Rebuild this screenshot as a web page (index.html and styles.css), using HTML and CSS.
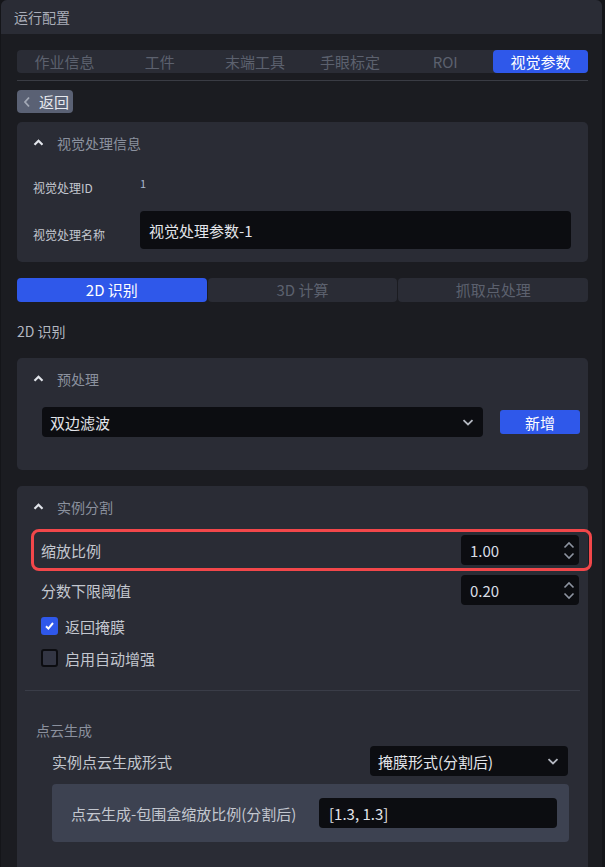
FILE: index.html
```html
<!DOCTYPE html>
<html lang="zh-CN">
<head>
<meta charset="utf-8">
<title>运行配置</title>
<link rel="stylesheet" href="styles.css">
</head>
<body>
<div class="window">
  <div class="win-header">运行配置</div>
  <div class="win-body">
    <div class="tabs">
      <div class="tab">作业信息</div>
      <div class="tab">工件</div>
      <div class="tab">末端工具</div>
      <div class="tab">手眼标定</div>
      <div class="tab">ROI</div>
      <div class="tab active">视觉参数</div>
    </div>
    <div class="tabs-line"></div>
    <button class="back-btn">
      <svg width="8" height="12" viewBox="0 0 8 12"><path d="M6 1.5 L2 6 L6 10.5" fill="none" stroke="#a3a9b6" stroke-width="1.8"/></svg>
      <span>返回</span>
    </button>

    <div class="card info-card">
      <div class="card-head">
        <svg class="chev" width="11" height="7" viewBox="0 0 11 7"><path d="M1.5 5.8 L5.5 1.8 L9.5 5.8" fill="none" stroke="#e1e4ea" stroke-width="2.2"/></svg>
        <span>视觉处理信息</span>
      </div>
      <div class="info-row id-row">
        <span class="info-label">视觉处理ID</span>
        <span class="info-id">1</span>
      </div>
      <div class="info-row name-row">
        <span class="info-label">视觉处理名称</span>
        <div class="text-input big">视觉处理参数-1</div>
      </div>
    </div>

    <div class="subtabs">
      <div class="subtab active">2D 识别</div>
      <div class="subtab">3D 计算</div>
      <div class="subtab">抓取点处理</div>
    </div>

    <div class="section-title">2D 识别</div>

    <div class="card pre-card">
      <div class="card-head">
        <svg class="chev" width="11" height="7" viewBox="0 0 11 7"><path d="M1.5 5.8 L5.5 1.8 L9.5 5.8" fill="none" stroke="#e1e4ea" stroke-width="2.2"/></svg>
        <span>预处理</span>
      </div>
      <div class="pre-row">
        <div class="select wide">
          <span>双边滤波</span>
          <svg width="12" height="7" viewBox="0 0 12 7"><path d="M1.5 1.2 L6 5.5 L10.5 1.2" fill="none" stroke="#b4b8c1" stroke-width="1.8"/></svg>
        </div>
        <button class="primary-btn">新增</button>
      </div>
    </div>

    <div class="card seg-card">
      <div class="card-head">
        <svg class="chev" width="11" height="7" viewBox="0 0 11 7"><path d="M1.5 5.8 L5.5 1.8 L9.5 5.8" fill="none" stroke="#e1e4ea" stroke-width="2.2"/></svg>
        <span>实例分割</span>
      </div>
      <div class="seg-body">
        <div class="form-row highlighted">
          <span class="form-label">缩放比例</span>
          <div class="num-input">
            <span>1.00</span>
            <span class="spin">
              <svg width="12" height="8" viewBox="0 0 12 8"><path d="M1.5 6.5 L6 2 L10.5 6.5" fill="none" stroke="#8e94a1" stroke-width="1.6"/></svg>
              <svg width="12" height="8" viewBox="0 0 12 8"><path d="M1.5 1.5 L6 6 L10.5 1.5" fill="none" stroke="#8e94a1" stroke-width="1.6"/></svg>
            </span>
          </div>
        </div>
        <div class="form-row">
          <span class="form-label">分数下限阈值</span>
          <div class="num-input">
            <span>0.20</span>
            <span class="spin">
              <svg width="12" height="8" viewBox="0 0 12 8"><path d="M1.5 6.5 L6 2 L10.5 6.5" fill="none" stroke="#8e94a1" stroke-width="1.6"/></svg>
              <svg width="12" height="8" viewBox="0 0 12 8"><path d="M1.5 1.5 L6 6 L10.5 1.5" fill="none" stroke="#8e94a1" stroke-width="1.6"/></svg>
            </span>
          </div>
        </div>
        <div class="check-row">
          <span class="checkbox checked">
            <svg width="11" height="10" viewBox="0 0 11 10"><path d="M2 5.2 L4.4 7.6 L9 2" fill="none" stroke="#ffffff" stroke-width="2"/></svg>
          </span>
          <span class="check-label">返回掩膜</span>
        </div>
        <div class="check-row">
          <span class="checkbox"></span>
          <span class="check-label">启用自动增强</span>
        </div>
        <div class="divider"></div>
        <div class="group-title">点云生成</div>
        <div class="group-row">
          <span class="form-label">实例点云生成形式</span>
          <div class="select mid">
            <span>掩膜形式(分割后)</span>
            <svg width="12" height="7" viewBox="0 0 12 7"><path d="M1.5 1.2 L6 5.5 L10.5 1.2" fill="none" stroke="#b4b8c1" stroke-width="1.8"/></svg>
          </div>
        </div>
        <div class="sub-box">
          <span class="form-label">点云生成-包围盒缩放比例(分割后)</span>
          <div class="text-input box-input">[1.3, 1.3]</div>
        </div>
      </div>
    </div>
  </div>
</div>
</body>
</html>
```

FILE: styles.css
```css
* { box-sizing: border-box; }

html, body {
  margin: 0;
  padding: 0;
  background: #141519;
  height: 867px;
  overflow: hidden;
  font-family: "Noto Sans CJK SC", "Noto Sans", sans-serif;
}

.window {
  margin-left: 1px;
  width: 601px;
  height: 867px;
  background: #1b1c21;
  border-radius: 6px 6px 0 0;
  overflow: hidden;
}

.win-header {
  height: 34px;
  background: #2a2c35;
  color: #a9adb8;
  font-size: 14px;
  line-height: 34px;
  padding-left: 13px;
}

.win-body {
  padding: 16px 14px 0 16px;
}

.tabs {
  display: grid;
  grid-template-columns: repeat(6, 1fr);
  height: 23px;
  background: #2a2c35;
  border-radius: 4px;
}

.tab {
  font-size: 15px;
  line-height: 23px;
  text-align: center;
  color: #5c616e;
  border-radius: 4px;
}

.tab.active {
  background: #2f58ea;
  color: #ffffff;
}

.tabs-line {
  height: 1px;
  background: #3a3c44;
  margin-top: 7px;
}

.back-btn {
  margin-top: 9px;
  height: 23px;
  width: 56px;
  border: none;
  border-radius: 4px;
  background: #5a6174;
  display: flex;
  align-items: center;
  gap: 8px;
  padding: 0 0 0 6px;
  font-family: inherit;
  font-size: 15px;
  color: #e6e9ef;
  line-height: 23px;
}

.card {
  background: #2a2c35;
  border-radius: 5px;
}

.card-head {
  height: 42px;
  display: flex;
  align-items: center;
  gap: 13px;
  color: #8b919e;
  font-size: 14px;
}

.chev { margin-top: -1px; flex: none; }

.info-card {
  margin-top: 9px;
  padding: 0 17px 13px 16px;
}

.info-row {
  display: flex;
  align-items: center;
}

.id-row {
  height: 34px;
  margin-top: 6px;
}

.name-row {
  margin-top: 7px;
}

.info-label {
  width: 107px;
  flex: none;
  font-size: 12px;
  color: #c3c7cf;
}

.name-row .info-label { margin-top: 8px; }

.info-id {
  font-size: 11px;
  color: #a8b6cc;
  margin-bottom: 9px;
}

.text-input {
  background: #0c0d11;
  border-radius: 4px;
  color: #e3e5ea;
  display: flex;
  align-items: center;
}

.text-input.big {
  flex: 1;
  height: 38px;
  padding-left: 9px;
  font-size: 15px;
}

.subtabs {
  margin-top: 16px;
  display: grid;
  grid-template-columns: repeat(3, 1fr);
  gap: 1px;
  height: 24px;
}

.subtab {
  background: #2a2c35;
  border-radius: 4px;
  text-align: center;
  font-size: 15px;
  line-height: 24px;
  color: #5c616e;
}

.subtab.active {
  background: #2f58ea;
  color: #ffffff;
}

.section-title {
  margin-top: 18px;
  font-size: 14px;
  line-height: 22px;
  color: #b3b7c0;
}

.pre-card {
  margin-top: 16px;
  padding: 0 8px 33px 25px;
}

.pre-card .card-head { margin-left: -9px; }

.pre-row {
  margin-top: 7px;
  display: flex;
  align-items: center;
  gap: 17px;
}

.select {
  background: #0c0d11;
  border-radius: 4px;
  height: 30px;
  display: flex;
  align-items: center;
  justify-content: space-between;
  color: #e3e5ea;
  font-size: 15px;
}

.select.wide {
  flex: 1;
  padding: 0 9px 0 8px;
}

.primary-btn {
  width: 80px;
  height: 24px;
  border: none;
  border-radius: 3px;
  background: #2f58ea;
  color: #ffffff;
  font-family: inherit;
  font-size: 15px;
  padding: 0;
}

.seg-card {
  margin-top: 16px;
  padding: 0 9px 40px 24px;
}

.seg-card .card-head { margin-left: -8px; }

.seg-body {
  padding-top: 7px;
}

.form-row {
  display: flex;
  align-items: center;
  justify-content: space-between;
  height: 30px;
  position: relative;
}

.form-row + .form-row { margin-top: 10px; }

.form-row.highlighted::before {
  content: "";
  position: absolute;
  left: -10px;
  right: -13px;
  top: -6px;
  bottom: -6px;
  border: 3px solid #f2474a;
  border-radius: 8px;
  pointer-events: none;
}

.form-label {
  font-size: 15px;
  color: #c3c7cf;
}

.num-input {
  width: 118px;
  height: 30px;
  background: #0c0d11;
  border-radius: 4px;
  display: flex;
  align-items: center;
  justify-content: space-between;
  padding: 0 4px 0 9px;
  font-size: 15px;
  color: #d9dde5;
}

.spin {
  display: flex;
  flex-direction: column;
  gap: 3px;
}

.spin svg { display: block; }

.check-row {
  display: flex;
  align-items: center;
  gap: 7px;
  height: 18px;
  margin-top: 12px;
}

.check-row + .check-row { margin-top: 14px; }

.checkbox {
  width: 17px;
  height: 18px;
  border-radius: 3px;
  background: #333644;
  border: 2px solid #0c0d11;
  display: flex;
  align-items: center;
  justify-content: center;
}

.checkbox.checked {
  background: #2f58ea;
  border: none;
}

.check-label {
  font-size: 15px;
  color: #c3c7cf;
}

.divider {
  height: 1px;
  background: #3a3d48;
  margin: 23px -1px 0 -16px;
}

.group-title {
  margin: 29px 0 0 -5px;
  font-size: 14px;
  line-height: 20px;
  color: #8b919e;
}

.group-row {
  margin: 6px 11px 0 11px;
  display: flex;
  align-items: center;
  justify-content: space-between;
}

.select.mid {
  width: 198px;
  padding: 0 9px 0 8px;
}

.sub-box {
  margin: 8px 10px 0 11px;
  height: 58px;
  background: #3d4251;
  border-radius: 4px;
  display: flex;
  align-items: center;
  justify-content: space-between;
  padding: 0 12px 0 19px;
}

.box-input {
  width: 238px;
  height: 30px;
  padding-left: 10px;
  font-size: 15px;
}
```
